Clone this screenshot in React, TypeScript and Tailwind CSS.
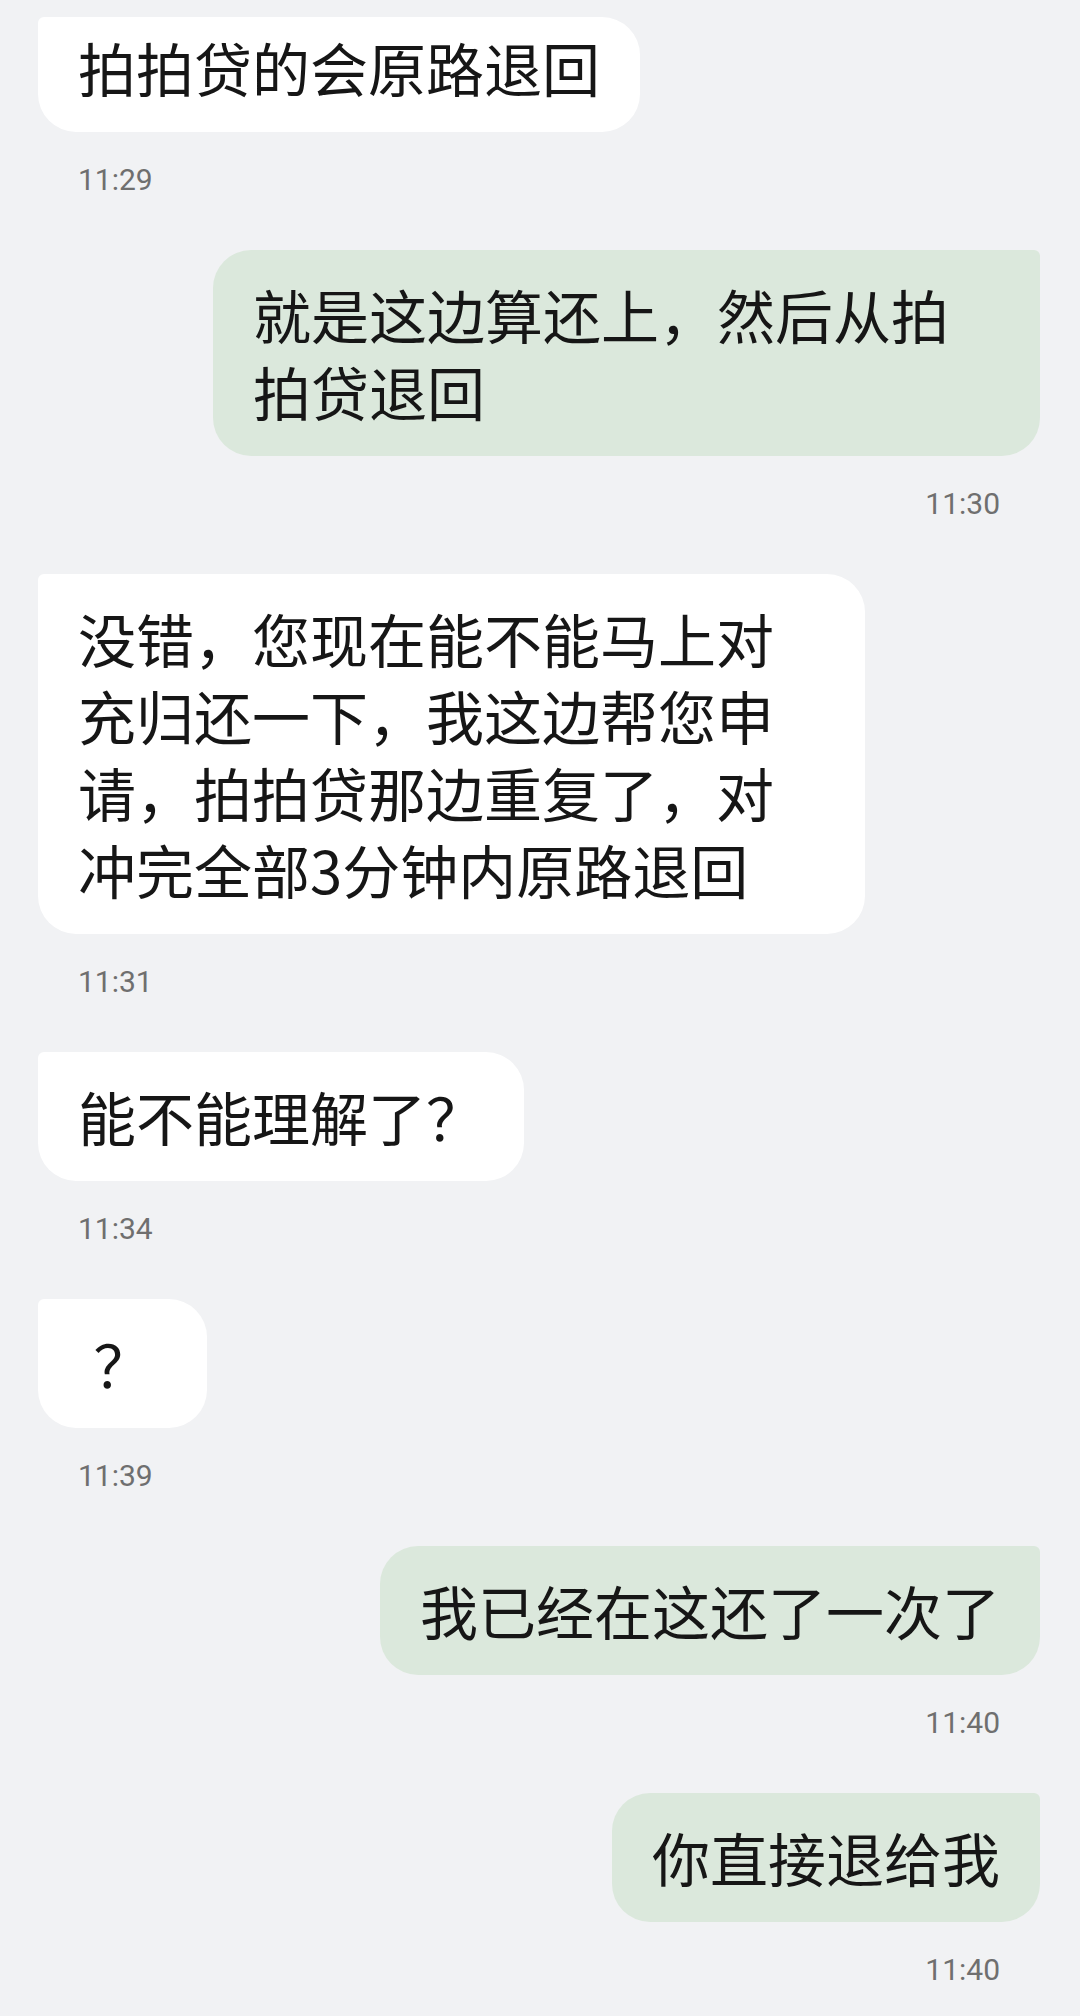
type Msg = {
  side: "left" | "right";
  text: string;
  time: string;
};

const messages: Msg[] = [
  { side: "left", text: "拍拍贷的会原路退回", time: "11:29" },
  { side: "right", text: "就是这边算还上，然后从拍拍贷退回", time: "11:30" },
  {
    side: "left",
    text: "没错，您现在能不能马上对充归还一下，我这边帮您申请，拍拍贷那边重复了，对冲完全部3分钟内原路退回",
    time: "11:31",
  },
  { side: "left", text: "能不能理解了？", time: "11:34" },
  { side: "left", text: "？", time: "11:39" },
  { side: "right", text: "我已经在这还了一次了", time: "11:40" },
  { side: "right", text: "你直接退给我", time: "11:40" },
];

function Bubble({ msg, first }: { msg: Msg; first: boolean }) {
  const left = msg.side === "left";
  // short messages sit in the middle of the min-width bubble
  const short = msg.text.length === 1;
  return (
    <div className={left ? "flex flex-col items-start" : "flex flex-col items-end"}>
      <div
        className={
          (left
            ? "bg-white rounded-[38px] rounded-tl-[6px] min-w-[169px] "
            : "bg-[#dbe8dc] rounded-[38px] rounded-tr-[6px] ") +
          (first ? "pt-[12px] " : "pt-[26px] ") +
          (short ? "text-center " : "") +
          "max-w-[827px] px-[40px] pb-[26px] text-[58px] leading-[77px] text-[#161616] break-all"
        }
      >
        {msg.text}
      </div>
      <div
        className={
          (left ? "pl-[40px] " : "pr-[40px] ") +
          "mt-[28px] mb-[50px] h-[40px] leading-[40px] text-[30px] text-[#6f6f6f] font-['Roboto',sans-serif]"
        }
      >
        {msg.time}
      </div>
    </div>
  );
}

export default function App() {
  return (
    <div className="w-[1080px] h-[2016px] overflow-hidden bg-[#f1f2f4] font-['Noto_Sans_CJK_SC','Noto_Sans',sans-serif]">
      <div className="pt-[17px] pl-[38px] pr-[40px] flex flex-col">
        {messages.map((m, i) => (
          <Bubble key={i} msg={m} first={i === 0} />
        ))}
      </div>
    </div>
  );
}
